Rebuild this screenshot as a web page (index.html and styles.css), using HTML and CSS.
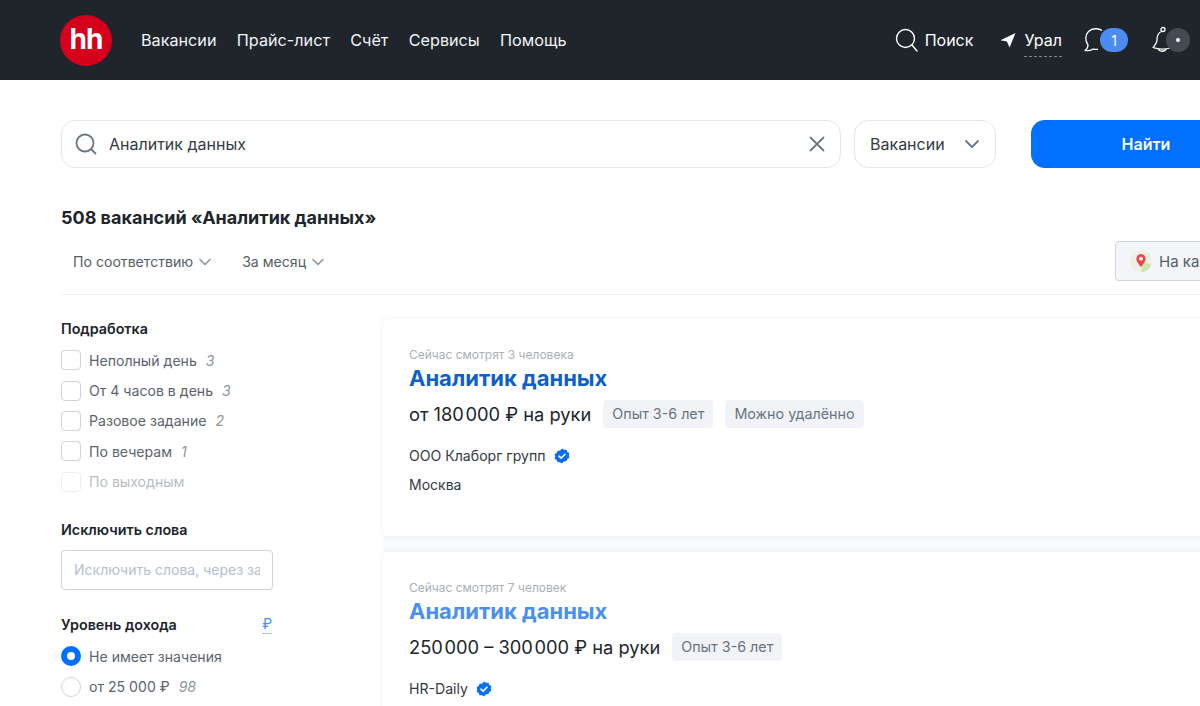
FILE: index.html
```html
<!DOCTYPE html>
<html lang="ru">
<head>
  <meta charset="UTF-8">
  <meta name="viewport" content="width=device-width, initial-scale=1.0">
  <title>Вакансии</title>
  <link rel="stylesheet" href="styles.css">
</head>
<body>
  <header class="header">
    <a class="logo">hh</a>
    <nav class="nav">
      <a>Вакансии</a>
      <a>Прайс-лист</a>
      <a>Счёт</a>
      <a>Сервисы</a>
      <a>Помощь</a>
    </nav>
    <div class="header-right">
      <a class="header-search">
        <svg width="23" height="24" viewBox="0 0 23 24" fill="none" stroke="#fff" stroke-width="1.4" stroke-linecap="round"><circle cx="10.5" cy="10.5" r="9"/><path d="M17 17l5 6"/></svg>
        Поиск
      </a>
      <a class="header-region">
        <svg width="16" height="16" viewBox="0 0 16 16" fill="#fff"><path d="M15.5 1L.5 8.2l6.4 1.2L9.6 15.5z"/></svg>
        <span class="region-name">Урал</span>
      </a>
      <a class="header-chat">
        <svg width="24" height="26" viewBox="0 0 24 26" fill="none" stroke="#fff" stroke-width="1.3" stroke-linejoin="round"><path d="M19 3.5C16 1 9 1 5.5 4.5 2 8 2 14 5 18c0 2-1 4-3 5.5 3 .5 6 0 8-1.5 1.5.6 3 .6 5 .3"/></svg>
        <span class="chat-count">1</span>
      </a>
      <a class="header-bell">
        <svg width="21" height="28" viewBox="0 0 21 28" fill="none" stroke="#fff" stroke-width="1.3" stroke-linejoin="round"><circle cx="11" cy="3.5" r="2"/><path d="M9.5 5.5C5.5 7 5 11 5 14c0 3-2 5-4 7.5 4 1.5 12 2 19 0"/><path d="M6.5 23c.5 3 6.5 3 7.5 0"/></svg>
        <span class="bell-dot"></span>
      </a>
    </div>
  </header>

  <main class="page">
    <form class="search-row">
      <div class="search-input">
        <svg width="24" height="24" viewBox="0 0 24 24" fill="none" stroke="#6a7885" stroke-width="1.8" stroke-linecap="round"><circle cx="11" cy="11" r="8.5"/><path d="M17.5 17.5l4 4"/></svg>
        <span class="search-text">Аналитик данных</span>
        <svg width="16" height="16" viewBox="0 0 16 16" fill="none" stroke="#6a7885" stroke-width="1.8" stroke-linecap="round"><path d="M1.5 1.5l13 13M14.5 1.5l-13 13"/></svg>
      </div>
      <div class="search-select">
        Вакансии
        <svg width="16" height="10" viewBox="0 0 16 10" fill="none" stroke="#6a7885" stroke-width="1.8" stroke-linecap="round" stroke-linejoin="round"><path d="M2 2l6 6 6-6"/></svg>
      </div>
      <button class="search-button" type="button">Найти</button>
    </form>

    <h1 class="results-title">508 вакансий «Аналитик данных»</h1>

    <div class="sort-row">
      <a class="sort-item">По соответствию
        <svg width="12" height="8" viewBox="0 0 12 8" fill="none" stroke="#8a97a3" stroke-width="1.6" stroke-linecap="round" stroke-linejoin="round"><path d="M1 1.5l5 5 5-5"/></svg>
      </a>
      <a class="sort-item">За месяц
        <svg width="12" height="8" viewBox="0 0 12 8" fill="none" stroke="#8a97a3" stroke-width="1.6" stroke-linecap="round" stroke-linejoin="round"><path d="M1 1.5l5 5 5-5"/></svg>
      </a>
      <a class="map-button">
        <svg width="24" height="24" viewBox="0 0 26 26"><circle cx="13" cy="13" r="12" fill="#eef0e4"/><path d="M13 25a12 12 0 0 0 11-8l-8-3z" fill="#cfe3b0"/><path d="M13 5.5a5 5 0 0 0-5 5c0 3.5 5 9 5 9s5-5.5 5-9a5 5 0 0 0-5-5z" fill="#e8474c"/><circle cx="13" cy="10.5" r="2" fill="#fff"/></svg>
        На карте
      </a>
    </div>

    <div class="content">
      <aside class="filters">
        <section class="filter">
          <h2 class="filter-title">Подработка</h2>
          <label class="option"><span class="box"></span>Неполный день <i class="count">3</i></label>
          <label class="option"><span class="box"></span>От 4 часов в день <i class="count">3</i></label>
          <label class="option"><span class="box"></span>Разовое задание <i class="count">2</i></label>
          <label class="option"><span class="box"></span>По вечерам <i class="count">1</i></label>
          <label class="option option-off"><span class="box"></span>По выходным</label>
        </section>

        <section class="filter filter-words">
          <h2 class="filter-title">Исключить слова</h2>
          <div class="words-input"><span>Исключить слова, через запятую</span></div>
        </section>

        <section class="filter filter-income">
          <div class="filter-head">
            <h2 class="filter-title">Уровень дохода</h2>
            <span class="currency">₽</span>
          </div>
          <label class="option"><span class="radio radio-on"></span>Не имеет значения</label>
          <label class="option"><span class="radio"></span>от 25 000 ₽ <i class="count">98</i></label>
        </section>
      </aside>

      <div class="results">
        <article class="card">
          <p class="watching">Сейчас смотрят 3 человека</p>
          <a class="vacancy vacancy-dark">Аналитик данных</a>
          <div class="salary-row">
            <span class="salary">от 180&#8202;000 ₽ на руки</span>
            <span class="tag">Опыт 3-6 лет</span>
            <span class="tag">Можно удалённо</span>
          </div>
          <div class="company">ООО Клаборг групп
            <svg width="16" height="16" viewBox="0 0 16 16"><path d="M8 .5l2 1.3 2.4-.1 1 2.2 2 1.3-.6 2.3.6 2.3-2 1.3-1 2.2-2.4-.1L8 15.5l-2-1.3-2.4.1-1-2.2-2-1.3.6-2.3L.6 6.2l2-1.3 1-2.2 2.4.1z" fill="#0a6ff0"/><path d="M5 8.2l2.1 2 3.9-4" fill="none" stroke="#fff" stroke-width="1.6" stroke-linecap="round" stroke-linejoin="round"/></svg>
          </div>
          <div class="city">Москва</div>
        </article>

        <article class="card">
          <p class="watching">Сейчас смотрят 7 человек</p>
          <a class="vacancy">Аналитик данных</a>
          <div class="salary-row">
            <span class="salary">250&#8202;000 – 300&#8202;000 ₽ на руки</span>
            <span class="tag">Опыт 3-6 лет</span>
          </div>
          <div class="company">HR-Daily
            <svg width="16" height="16" viewBox="0 0 16 16"><path d="M8 .5l2 1.3 2.4-.1 1 2.2 2 1.3-.6 2.3.6 2.3-2 1.3-1 2.2-2.4-.1L8 15.5l-2-1.3-2.4.1-1-2.2-2-1.3.6-2.3L.6 6.2l2-1.3 1-2.2 2.4.1z" fill="#0a6ff0"/><path d="M5 8.2l2.1 2 3.9-4" fill="none" stroke="#fff" stroke-width="1.6" stroke-linecap="round" stroke-linejoin="round"/></svg>
          </div>
        </article>
      </div>
    </div>
  </main>
</body>
</html>
```

FILE: styles.css
```css
html, body {
  height: 706px;
  overflow: hidden;
}
body {
  margin: 0;
  width: 1200px;
  font-family: Inter, "Noto Sans", sans-serif;
  color: #20252c;
  background-color: #fff;
}
h1, h2, p {
  margin: 0;
}

.header {
  display: flex;
  align-items: center;
  height: 80px;
  padding: 0 10px 0 60px;
  box-sizing: border-box;
  background-color: #20252c;
  color: #fff;
}
.logo {
  display: flex;
  align-items: center;
  justify-content: center;
  width: 52px;
  height: 51px;
  padding-bottom: 2px;
  box-sizing: border-box;
  border-radius: 50%;
  background-color: #d6001c;
  color: #fff;
  font-size: 28px;
  font-weight: 700;
  letter-spacing: -1px;
}
.nav {
  display: flex;
  gap: 20.3px;
  margin-left: 29px;
  font-size: 16.2px;
  color: #f1f3f5;
}
.header-right {
  display: flex;
  align-items: center;
  margin-left: auto;
  font-size: 16px;
}
.header-search {
  display: flex;
  align-items: center;
  gap: 7px;
}
.header-region {
  display: flex;
  align-items: center;
  gap: 8px;
  margin-left: 27px;
}
.region-name {
  position: relative;
}
.region-name::after {
  content: "";
  position: absolute;
  left: 0;
  right: 0;
  bottom: -7px;
  border-bottom: 1px dashed #7a848e;
}
.header-chat {
  display: flex;
  align-items: center;
  margin-left: 21px;
}
.chat-count {
  display: flex;
  align-items: center;
  justify-content: center;
  width: 28px;
  height: 24px;
  margin-left: -7px;
  border-radius: 12px;
  background-color: #4a8cf0;
  font-size: 14px;
}
.header-bell {
  display: flex;
  align-items: center;
  margin-left: 24px;
}
.bell-dot {
  display: flex;
  align-items: center;
  justify-content: center;
  width: 24px;
  height: 24px;
  margin-left: -7px;
  border-radius: 50%;
  background-color: #454a52;
}
.bell-dot::after {
  content: "";
  width: 4px;
  height: 4px;
  border-radius: 50%;
  background-color: #fff;
}

.page {
  padding: 40px 0 0 61px;
}
.search-row {
  display: flex;
  width: 1200px;
}
.search-input,
.search-select {
  display: flex;
  align-items: center;
  height: 48px;
  box-sizing: border-box;
  border: 1px solid #e3e6ea;
  border-radius: 14px;
  font-size: 16px;
  color: #333a42;
}
.search-input {
  flex: none;
  width: 780px;
  padding: 0 15px 0 12px;
}
.search-text {
  flex: 1;
  margin-left: 11px;
}
.search-select {
  flex: none;
  justify-content: space-between;
  width: 142px;
  margin-left: 13px;
  padding: 0 15px;
}
.search-button {
  flex: none;
  width: 230px;
  height: 48px;
  margin-left: 35px;
  border: none;
  border-radius: 14px;
  background-color: #0070ff;
  color: #fff;
  font-family: inherit;
  font-size: 16px;
  font-weight: 600;
}

.results-title {
  margin-top: 39px;
  font-size: 18px;
  line-height: 22px;
  font-weight: 700;
}
.sort-row {
  display: flex;
  align-items: center;
  height: 66px;
  padding-left: 12px;
  border-bottom: 1px solid #eceef1;
  width: 1139px;
  box-sizing: border-box;
  font-size: 14.1px;
  color: #555d66;
}
.sort-item {
  display: flex;
  align-items: center;
  gap: 6px;
  margin-right: 31px;
}
.map-button {
  display: flex;
  flex: none;
  align-items: center;
  gap: 6px;
  height: 40px;
  width: 120px;
  position: absolute;
  left: 1115px;
  top: 241px;
  box-sizing: border-box;
  padding-left: 13px;
  border: 1px solid #ccd3da;
  border-radius: 4px;
  background-color: #f3f5f8;
  font-size: 15px;
}

.content {
  display: flex;
  margin-top: 24px;
}
.filters {
  flex: none;
  width: 212px;
  margin-right: 110px;
}
.filter-words {
  margin-top: 23px;
}
.filter-income {
  margin-top: 25px;
}
.filter-title {
  font-size: 14.3px;
  line-height: 20px;
  font-weight: 600;
}
.filter-head {
  display: flex;
  justify-content: space-between;
  align-items: flex-start;
}
.currency {
  font-size: 14px;
  line-height: 18px;
  margin-right: 1px;
  color: #4a8cf0;
  border-bottom: 1px dashed #9bbdf0;
}
.filter > .filter-title + .option,
.filter-head + .option {
  margin-top: 6px;
}
.option {
  display: flex;
  align-items: center;
  height: 30.4px;
  font-size: 14.1px;
  color: #5c646d;
}
.option-off {
  color: #b8bdc3;
}
.option-off .box {
  border-color: #eceef1;
}
.box,
.radio {
  flex: none;
  box-sizing: border-box;
  width: 20px;
  height: 20px;
  margin-right: 8px;
  border: 1px solid #ccd3da;
  border-radius: 4px;
}
.radio {
  border-radius: 50%;
}
.radio-on {
  border: 6px solid #0070ff;
}
.count {
  margin-left: 9px;
  color: #8e969e;
}
.words-input {
  display: flex;
  align-items: center;
  box-sizing: border-box;
  height: 40px;
  margin-top: 10px;
  padding: 0 12px;
  border: 1px solid #ccd3da;
  border-radius: 4px;
  font-size: 14px;
  color: #b4c0cb;
}
.words-input span {
  overflow: hidden;
  white-space: nowrap;
}

.results {
  flex: none;
  width: 900px;
  background-color: #f8fafc;
}
.card {
  box-sizing: border-box;
  height: 217px;
  margin-bottom: 16px;
  padding: 28px 26px 0;
  background-color: #fff;
  border-radius: 4px;
  box-shadow: 0 0 6px rgba(120, 140, 170, 0.12);
}
.watching {
  font-size: 12px;
  line-height: 16px;
  color: #a9afb5;
}
.vacancy {
  display: block;
  margin-top: 2px;
  font-size: 22px;
  line-height: 26px;
  font-weight: 700;
  color: #4a90ec;
}
.vacancy-dark {
  color: #0f5fc9;
}
.salary-row {
  display: flex;
  align-items: center;
  gap: 12px;
  margin-top: 9px;
}
.salary {
  font-size: 18.3px;
  color: #20252c;
}
.tag {
  padding: 0 9px;
  font-size: 14.3px;
  line-height: 28px;
  border-radius: 4px;
  background-color: #f1f3f7;
  color: #6a7480;
}
.company {
  display: flex;
  align-items: center;
  gap: 8px;
  margin-top: 19px;
  font-size: 14.1px;
  line-height: 18px;
  color: #333a42;
}
.city {
  margin-top: 11px;
  font-size: 14px;
  line-height: 18px;
  color: #333a42;
}
```
